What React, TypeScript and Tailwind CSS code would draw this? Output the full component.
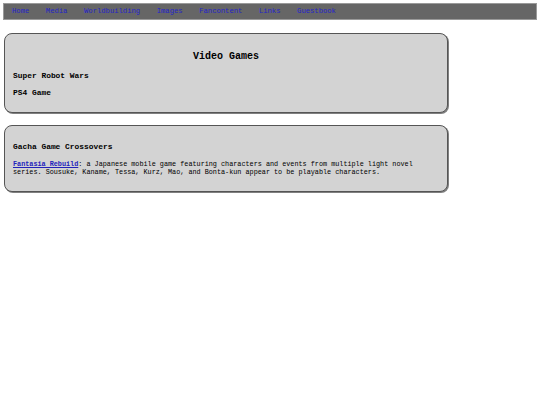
const links = ['Home', 'Media', 'Worldbuilding', 'Images', 'Fancontent', 'Links', 'Guestbook']

export default function App() {
  return (
    <div className="w-[540px] h-[405px] bg-white pt-[3px] font-['Liberation_Mono',monospace] text-black">
      <nav className="mx-[3px] h-[17px] bg-[#666666] border border-[#9a9a9a] flex items-center pl-[8px] gap-[16.6px]">
        {links.map(l => (
          <a key={l} href="#" className="text-[7.2px] leading-none text-[#2424c8]">{l}</a>
        ))}
      </nav>

      <div className="ml-[4px] mt-[13px] w-[444px] rounded-[8px] bg-[#d3d3d3] border border-[#555] shadow-[1px_1px_0_0_#808080] pt-[17px] pb-[14px] pl-[8px]">
        <h2 className="text-center pr-[8px] text-[10px] leading-[12px] font-bold">Video Games</h2>
        <div className="mt-[8px] text-[7.9px] leading-[10px] font-bold">Super Robot Wars</div>
        <div className="mt-[7px] text-[7.9px] leading-[10px] font-bold">PS4 Game</div>
      </div>

      <div className="ml-[4px] mt-[12px] w-[444px] rounded-[8px] bg-[#d3d3d3] border border-[#555] shadow-[1px_1px_0_0_#808080] pt-[16px] pb-[15px] pl-[8px] pr-[28px]">
        <div className="text-[7.9px] leading-[10px] font-bold">Gacha Game Crossovers</div>
        <p className="mt-[9px] text-[6.8px] leading-[7.6px]">
          <a href="#" className="font-bold underline text-[#2222bb]">Fantasia Rebuild</a>: a Japanese mobile game featuring characters and events from multiple light novel series. Sousuke, Kaname, Tessa, Kurz, Mao, and Bonta-kun appear to be playable characters.
        </p>
      </div>
    </div>
  )
}
